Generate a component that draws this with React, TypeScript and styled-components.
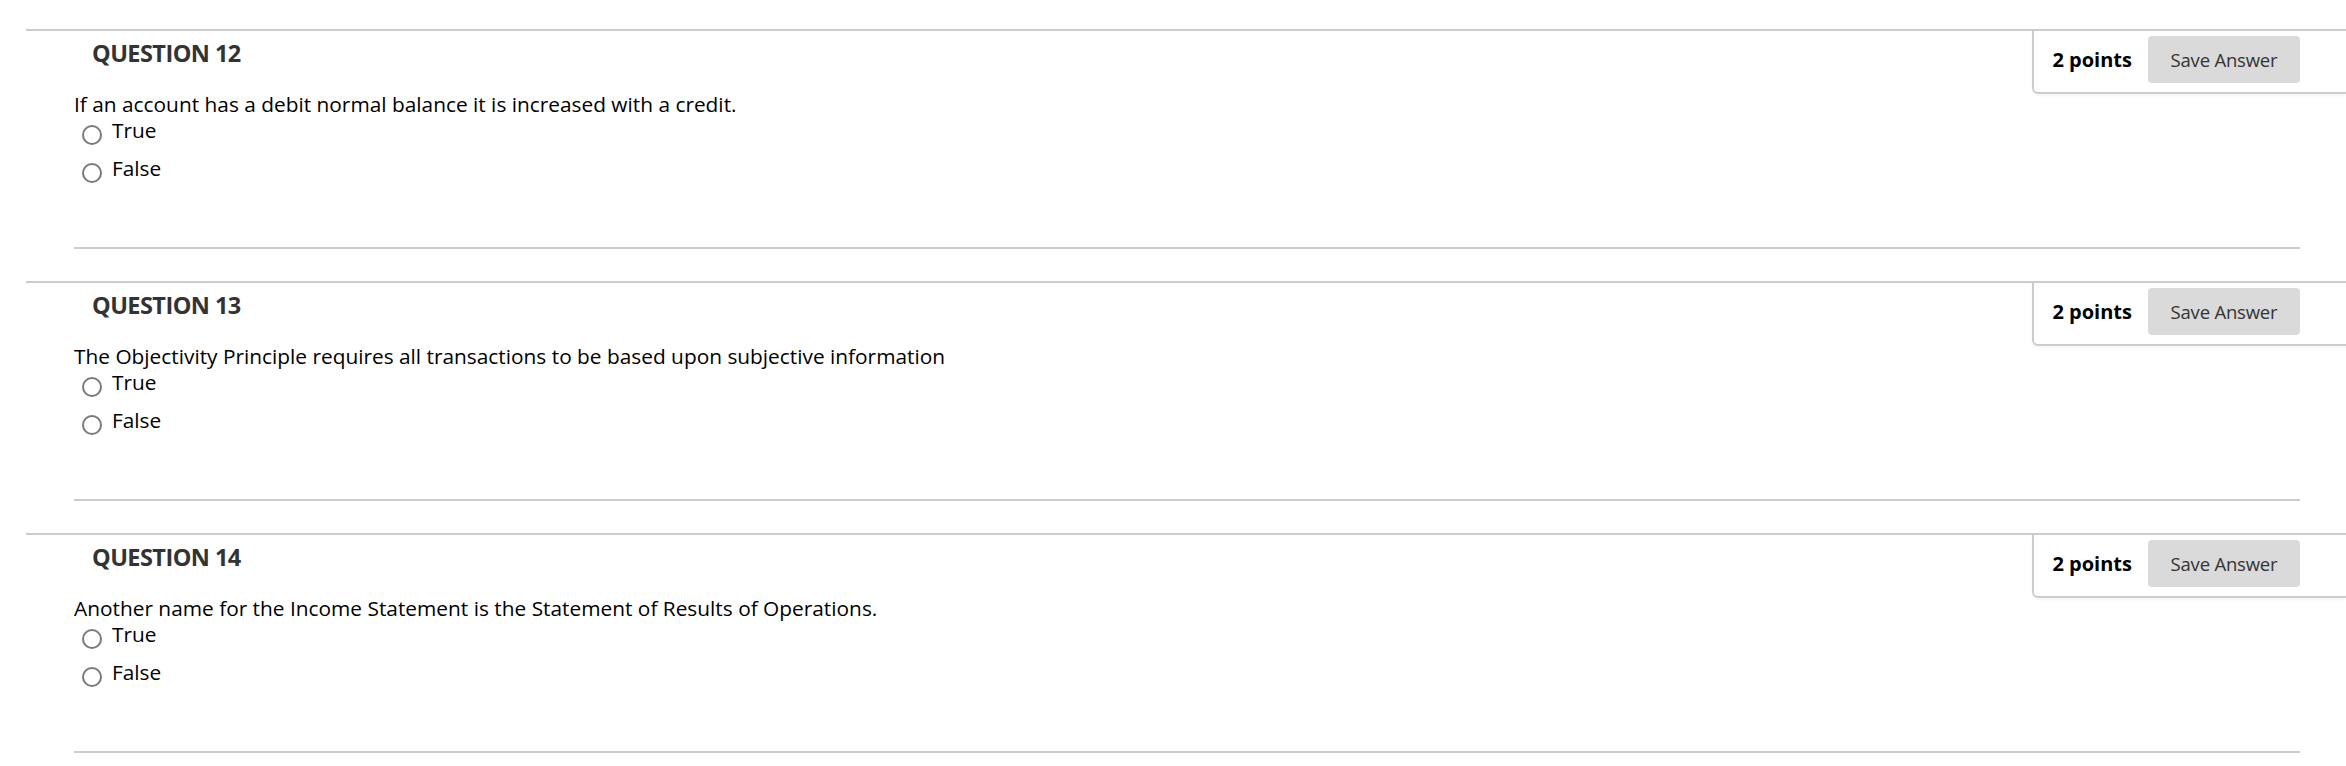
import styled, { createGlobalStyle } from 'styled-components';

const questions = [
  {
    number: 12,
    text: 'If an account has a debit normal balance it is increased with a credit.',
  },
  {
    number: 13,
    text: 'The Objectivity Principle requires all transactions to be based upon subjective information',
  },
  {
    number: 14,
    text: 'Another name for the Income Statement is the Statement of Results of Operations.',
  },
];

const GlobalStyle = createGlobalStyle`
  html, body {
    margin: 0;
    padding: 0;
    background: #fff;
  }
  body {
    font-family: "Open Sans", "Liberation Sans", sans-serif;
    color: #000;
  }
`;

export default function App() {
  return (
    <S.Page>
      <GlobalStyle />
      {questions.map((q) => (
        <S.Question key={q.number}>
          <S.Header>
            <S.Title>QUESTION {q.number}</S.Title>
            <S.PointsBox>
              <S.Points>2 points</S.Points>
              <S.SaveButton type="button">Save Answer</S.SaveButton>
            </S.PointsBox>
          </S.Header>
          <S.Body>
            <S.Prompt>{q.text}</S.Prompt>
            <S.Options>
              {['True', 'False'].map((label) => (
                <S.Option key={label}>
                  <S.Radio type="radio" name={`q${q.number}`} />
                  <S.OptionLabel>{label}</S.OptionLabel>
                </S.Option>
              ))}
            </S.Options>
          </S.Body>
        </S.Question>
      ))}
    </S.Page>
  );
}

const S = {
  Page: styled.div`
    padding-top: 29px;
    padding-left: 26px;
  `,
  Question: styled.section`
    border-top: 2px solid #cccccc;
    margin-bottom: 32px;
  `,
  Header: styled.div`
    display: flex;
    justify-content: space-between;
    align-items: flex-start;
  `,
  Title: styled.h2`
    margin: 10px 0 0 66px;
    font-size: 23.5px;
    line-height: 24px;
    letter-spacing: -0.55px;
    font-weight: 700;
    color: #333333;
  `,
  PointsBox: styled.div`
    display: flex;
    align-items: center;
    gap: 16px;
    padding: 5px 46px 9px 18px;
    border-left: 2px solid #cccccc;
    border-bottom: 2px solid #cccccc;
    border-bottom-left-radius: 6px;
    background: #fff;
    box-shadow: 0 2px 3px rgba(0, 0, 0, 0.04);
  `,
  Points: styled.span`
    font-size: 20px;
    font-weight: 700;
    color: #000;
  `,
  SaveButton: styled.button`
    width: 152px;
    height: 47px;
    border: none;
    border-radius: 4px;
    background: #dadada;
    color: #333333;
    font-family: "Open Sans", "Liberation Sans", sans-serif;
    font-size: 18.5px;
    letter-spacing: -0.2px;
    padding: 0;
  `,
  Body: styled.div`
    margin: 0 46px 0 48px;
    padding-bottom: 64px;
    border-bottom: 2px solid #cccccc;
  `,
  Prompt: styled.p`
    margin: 0;
    font-size: 20.85px;
    line-height: 20px;
    color: #000;
  `,
  Options: styled.div`
    display: flex;
    flex-direction: column;
    gap: 8px;
    margin-top: 1px;
  `,
  Option: styled.label`
    display: flex;
    align-items: flex-start;
    gap: 10px;
    padding-left: 8px;
    height: 30px;
  `,
  Radio: styled.input`
    appearance: none;
    box-sizing: border-box;
    width: 20px;
    height: 20px;
    margin: 10px 0 0 0;
    border: 2px solid #7a7a7a;
    border-radius: 50%;
    background: #fff;
  `,
  OptionLabel: styled.span`
    font-size: 20.85px;
    line-height: 30px;
    color: #000;
  `,
};
